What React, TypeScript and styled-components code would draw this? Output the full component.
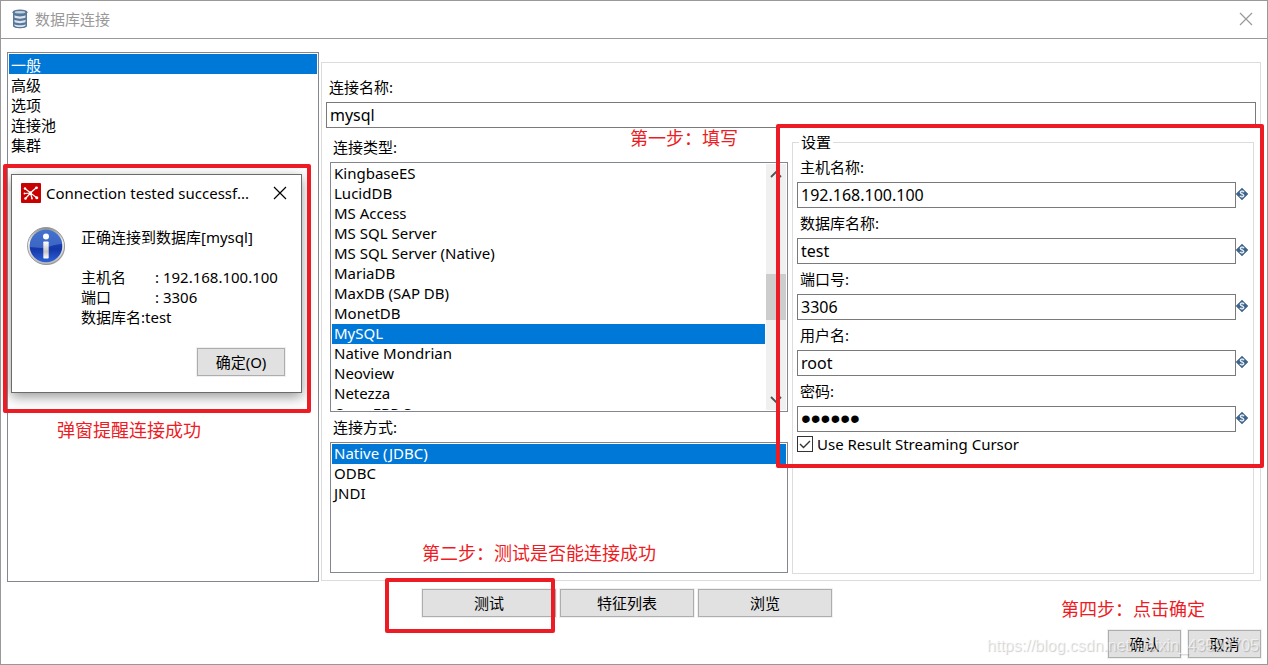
import React from 'react';
import styled, { createGlobalStyle } from 'styled-components';

const GlobalStyle = createGlobalStyle`
  * { box-sizing: border-box; }
  body {
    margin: 0;
    background: #fff;
    color: #000;
    font-family: "Noto Sans", "Noto Sans CJK SC", sans-serif;
    font-size: 15px;
    line-height: 20px;
  }
  button, input, select { font: inherit; color: inherit; }
`;

const Window = styled.div`
  position: relative;
  min-height: 100vh;
  display: flex;
  flex-direction: column;
  border: 1px solid #999;
  background: #fff;
`;

const TitleBar = styled.header`
  display: flex;
  align-items: center;
  height: 38px;
  padding: 0 14px 2px 10px;
  gap: 6px;
  border-bottom: 1px solid #999;
  color: #999;
`;

const Title = styled.h1`
  flex: 1;
  margin: 0;
  font-size: 15px;
  font-weight: 400;
`;

const CloseButton = styled.button`
  display: flex;
  padding: 0;
  border: 0;
  background: none;
`;

const Content = styled.main`
  flex: 1;
  display: grid;
  grid-template-columns: 312px minmax(0, 1fr);
  gap: 2px;
  padding: 13px 6px 0;
`;

const NavCell = styled.div`
  position: relative;
  display: flex;
`;

const Panel = styled.section`
  display: flex;
  flex-direction: column;
  margin: 10px 0 1px;
  padding: 14px 4px 6px;
  border: 1px solid #dcdcdc;
`;

const Label = styled.label`
  display: block;
  margin: 0 0 5px 3px;
`;

const TextInput = styled.input`
  display: block;
  flex: 1 1 26px;
  width: 100%;
  min-width: 0;
  height: 26px;
  padding: 0 3px;
  border: 1px solid #7a7a7a;
  border-radius: 0;
  background: #fff;
  outline: 0;
  font-size: 16px;
`;

const NameField = styled.div`
  display: flex;
  flex-direction: column;
`;

const Columns = styled.div`
  flex: 1;
  display: grid;
  grid-template-columns: 229fr 231fr;
  gap: 4px;
  margin: 4px 2px 0 4px;
`;

const ListColumn = styled.div`
  display: flex;
  flex-direction: column;
  padding: 5px 0 1px;
`;

const ListFrame = styled.div<{ $height: number; $fixed?: boolean }>`
  display: flex;
  flex: ${p => (p.$fixed ? 0 : 1)} 0 ${p => p.$height}px;
  margin-bottom: ${p => (p.$fixed ? 5 : 0)}px;
  padding: 1px;
  border: 1px solid #828790;
`;

const ListBox = styled.select`
  flex: 1;
  min-width: 0;
  height: auto;
  padding: 0;
  border: 0;
  border-radius: 0;
  outline: 0;
  background: #fff;
  overflow: hidden;
  scrollbar-width: none;

  option {
    display: flex;
    align-items: center;
    min-height: 20px;
    height: 20px;
    padding: 0 2px 2px;
    color: #000;
  }
  option:checked {
    background: #0078d7 linear-gradient(#0078d7, #0078d7);
    color: #fff;
    -webkit-text-fill-color: #fff;
  }
`;

const SectionList = styled(ListBox)`
  option { padding-bottom: 0; }
`;

const ScrollTrack = styled.div`
  display: flex;
  flex-direction: column;
  align-items: center;
  width: 20px;
  margin-left: 1px;
  padding: 4px 0;
  background: #f0f0f0;
`;

const ScrollThumb = styled.div`
  width: 20px;
  height: 46px;
  margin: 94px 0 auto;
  background: #cdcdcd;
`;

const SettingsCell = styled.div`
  position: relative;
  display: flex;
  min-width: 0;
`;

const Settings = styled.fieldset`
  flex: 1;
  min-width: 0;
  margin: 0;
  padding: 5px 5px 0 4px;
  border: 1px solid #dcdcdc;
`;

const Legend = styled.legend`
  margin-left: 2px;
  padding: 0 2px;
`;

const Field = styled.div`
  margin-bottom: 5px;
`;

const FieldRow = styled.div`
  display: flex;
  align-items: flex-start;
`;

const PasswordInput = styled(TextInput)`
  font-family: "Liberation Sans", sans-serif;
  font-size: 28px;
`;

const VariableMark = styled.svg`
  margin-top: 6px;
`;

const CheckRow = styled.label`
  display: flex;
  align-items: center;
  gap: 4px;
  margin-top: -3px;
`;

const Check = styled.input`
  appearance: none;
  width: 16px;
  height: 16px;
  margin: 0;
  border: 1px solid #333;
  background: #fff;

  &:checked {
    background: url("data:image/svg+xml,%3Csvg xmlns='http://www.w3.org/2000/svg' viewBox='0 0 14 14'%3E%3Cpath d='M2 7l3.5 3.5L12 4' fill='none' stroke='%23333' stroke-width='1.4'/%3E%3C/svg%3E") center / 14px 14px;
  }
`;

const PushButton = styled.button<{ $width: number }>`
  width: ${p => p.$width}px;
  height: 28px;
  padding: 0;
  border: 1px solid #adadad;
  background: #e1e1e1;
  box-shadow: 0 0 0 1px #f0f0f0;
`;

const ActionRow = styled.div`
  display: flex;
  justify-content: center;
  padding: 7px 14px 0 0;
`;

const ActionGroup = styled.div`
  position: relative;
  display: flex;
  gap: 4px;
`;

const Footer = styled.footer`
  position: relative;
  display: flex;
  justify-content: flex-end;
  gap: 7px;
  padding: 13px 6px 6px;
`;

const Highlight = styled.div<{ $inset: string; $width?: number; $height?: number }>`
  position: absolute;
  inset: ${p => p.$inset};
  width: ${p => (p.$width ? `${p.$width}px` : 'auto')};
  height: ${p => (p.$height ? `${p.$height}px` : 'auto')};
  border: 4px solid #ed1c24;
  border-radius: 2px;
  pointer-events: none;
  z-index: 3;
`;

const Note = styled.p<{ $inset: string }>`
  position: absolute;
  inset: ${p => p.$inset};
  margin: 0;
  color: #ed1c24;
  font-family: "Noto Sans CJK SC", sans-serif;
  font-size: 18px;
  font-weight: 400;
  line-height: 24px;
  white-space: nowrap;
  z-index: 3;
`;

const Watermark = styled.span`
  position: absolute;
  right: 8px;
  bottom: 8px;
  color: rgba(255, 255, 255, 0.6);
  font-family: "Liberation Sans", sans-serif;
  font-size: 16px;
  text-shadow: 1px 1px 1px rgba(0, 0, 0, 0.2);
  white-space: nowrap;
  pointer-events: none;
`;

const Dialog = styled.section`
  position: absolute;
  left: 4px;
  top: 122px;
  width: 291px;
  display: flex;
  flex-direction: column;
  border: 1px solid #6b6b6b;
  background: #fff;
  box-shadow: 0 4px 12px rgba(0, 0, 0, 0.4);
  z-index: 2;
`;

const DialogBar = styled.header`
  display: flex;
  align-items: center;
  height: 36px;
  padding: 0 14px 0 9px;
  gap: 5px;
`;

const DialogTitle = styled.h2`
  flex: 1;
  margin: 0;
  font-size: 15px;
  font-weight: 400;
  white-space: nowrap;
`;

const DialogBody = styled.div`
  display: flex;
  gap: 15px;
  padding: 15px 14px 21px;
`;

const Message = styled.div`
  padding-top: 1px;
`;

const Line = styled.p<{ $gap?: boolean }>`
  display: flex;
  margin: ${p => (p.$gap ? '0 0 20px' : '0')};
  white-space: nowrap;
`;

const Key = styled.span`
  width: 74px;
`;

const DialogActions = styled.div`
  display: flex;
  justify-content: flex-end;
  padding: 0 16px 16px;
`;

const Cross = () => (
  <svg width="14" height="14" viewBox="0 0 14 14" aria-hidden="true">
    <path d="M1 1l12 12M13 1L1 13" stroke="currentColor" strokeWidth="1.2" fill="none" />
  </svg>
);

const DatabaseIcon = () => (
  <svg width="18" height="20" viewBox="0 0 18 20" aria-hidden="true">
    <path d="M2 3v14c0 3 14 3 14 0V3" fill="#58789a" />
    <ellipse cx="9" cy="3.2" rx="7.5" ry="2.7" fill="#58789a" />
    <ellipse cx="9" cy="3.2" rx="5.3" ry="1.2" fill="#c5d2de" />
    <path d="M3.5 6.3c2 1.5 9 1.5 11 0v2.2c-2 1.5-9 1.5-11 0zM3.5 10.8c2 1.5 9 1.5 11 0V13c-2 1.5-9 1.5-11 0zM3.5 15.2c2 1.5 9 1.5 11 0v1.5c-2 1.7-9 1.7-11 0z" fill="#dce5ed" />
  </svg>
);

const ProductIcon = () => (
  <svg width="20" height="20" viewBox="0 0 20 20" aria-hidden="true">
    <rect width="20" height="20" rx="1" fill="#c80000" />
    <path d="M4 5.5l5.500 4.500 6-5.500M3.500 10.500l6-.5 6.300 4.800M4.500 15.500l5-5.500 1.500 5.500M9.500 10l3-3" stroke="#fff" strokeWidth="1.200" fill="none" />
    <g fill="#fff">
      <circle cx="9.500" cy="10" r="1.700" />
      <circle cx="4" cy="5.500" r="1.200" />
      <circle cx="15.500" cy="4.800" r="1.400" />
      <circle cx="3.500" cy="10.500" r="0.900" />
      <circle cx="4.500" cy="15.500" r="1.300" />
      <circle cx="15.800" cy="14.800" r="1.500" />
      <circle cx="11" cy="15.500" r="0.900" />
    </g>
  </svg>
);

const InfoIcon = () => (
  <svg width="40" height="40" viewBox="0 0 40 40" aria-hidden="true">
    <defs>
      <linearGradient id="infoRim" x1="0" y1="0" x2="0" y2="1">
        <stop offset="0" stopColor="#8f8f8f" />
        <stop offset="0.4" stopColor="#f4f4f4" />
        <stop offset="1" stopColor="#b5b5b5" />
      </linearGradient>
      <linearGradient id="infoFill" x1="0" y1="0" x2="0" y2="1">
        <stop offset="0" stopColor="#1f55b8" />
        <stop offset="0.6" stopColor="#1437a8" />
        <stop offset="1" stopColor="#2f62d8" />
      </linearGradient>
      <linearGradient id="infoStem" x1="0" y1="0" x2="0" y2="1">
        <stop offset="0" stopColor="#fff" />
        <stop offset="0.6" stopColor="#c4c4c4" />
        <stop offset="1" stopColor="#fff" />
      </linearGradient>
    </defs>
    <circle cx="21" cy="21" r="18" fill="#000" opacity="0.25" />
    <circle cx="20" cy="20" r="18.500" fill="url(#infoRim)" stroke="#8a8a8a" strokeWidth="0.800" />
    <circle cx="20" cy="20" r="16.300" fill="url(#infoFill)" />
    <path d="M4 21a16 16 0 0 1 32-3c-8 0-14 4-20 4-5 0-8-1-12-1z" fill="#6f9ae6" opacity="0.450" />
    <circle cx="20" cy="10.500" r="3" fill="#fff" />
    <rect x="17.300" y="15.500" width="5.400" height="17" rx="0.800" fill="url(#infoStem)" />
  </svg>
);

const VariableIcon = () => (
  <VariableMark width="12" height="12" viewBox="0 0 12 12" aria-hidden="true">
    <path d="M6 0l6 6-6 6-6-6z" fill="#3d6488" stroke="#3d6488" strokeWidth="0.500" />
    <path d="M8 4.200C7.500 2.800 4.300 2.800 4.300 4.500 4.300 6.200 7.800 5.700 7.800 7.500 7.800 9.200 4.400 9.200 4 7.800" stroke="#e4ecf3" strokeWidth="1.300" fill="none" />
    <path d="M6 2v8" stroke="#e4ecf3" strokeWidth="0.500" fill="none" />
  </VariableMark>
);

const Chevron = ({ down }: { down?: boolean }) => (
  <svg width="12" height="12" viewBox="0 0 12 12" aria-hidden="true">
    <path d={down ? 'M1 3l5 5 5-5' : 'M1 9l5-5 5 5'} stroke="#505050" strokeWidth="1.800" fill="none" />
  </svg>
);

const sections = ['一般', '高级', '选项', '连接池', '集群'];
const databases = [
  'KingbaseES', 'LucidDB', 'MS Access', 'MS SQL Server', 'MS SQL Server (Native)', 'MariaDB',
  'MaxDB (SAP DB)', 'MonetDB', 'MySQL', 'Native Mondrian', 'Neoview', 'Netezza', 'OpenERP Server',
];
const accessModes = ['Native (JDBC)', 'ODBC', 'JNDI'];
const fields = [
  { id: 'host', label: '主机名称:', value: '192.168.100.100' },
  { id: 'database', label: '数据库名称:', value: 'test' },
  { id: 'port', label: '端口号:', value: '3306' },
  { id: 'user', label: '用户名:', value: 'root' },
];

const options = (items: string[]) => items.map(item => <option key={item}>{item}</option>);

export default function App() {
  return (
    <>
      <GlobalStyle />
      <Window>
        <TitleBar>
          <DatabaseIcon />
          <Title>数据库连接</Title>
          <CloseButton aria-label="关闭"><Cross /></CloseButton>
        </TitleBar>

        <Content>
          <NavCell>
            <ListFrame $height={300}>
              <SectionList size={5} defaultValue="一般" aria-label="数据库连接">{options(sections)}</SectionList>
            </ListFrame>
            <Dialog role="dialog" aria-labelledby="dialog-title">
              <DialogBar>
                <ProductIcon />
                <DialogTitle id="dialog-title">Connection tested successf...</DialogTitle>
                <CloseButton aria-label="关闭"><Cross /></CloseButton>
              </DialogBar>
              <DialogBody>
                <InfoIcon />
                <Message>
                  <Line $gap>正确连接到数据库[mysql]</Line>
                  <Line><Key>主机名</Key>: 192.168.100.100</Line>
                  <Line><Key>端口</Key>: 3306</Line>
                  <Line>数据库名:test</Line>
                </Message>
              </DialogBody>
              <DialogActions>
                <PushButton $width={88}>确定(O)</PushButton>
              </DialogActions>
            </Dialog>
            <Highlight $inset="112px auto auto -4px" $width={308} $height={249} />
            <Note $inset="365px auto auto 50px">弹窗提醒连接成功</Note>
          </NavCell>

          <Panel>
            <NameField>
              <Label htmlFor="name">连接名称:</Label>
              <TextInput id="name" defaultValue="mysql" />
            </NameField>
            <Columns>
              <ListColumn>
                <Label htmlFor="type">连接类型:</Label>
                <ListFrame $height={250} $fixed>
                  <ListBox id="type" size={12} defaultValue="MySQL">{options(databases)}</ListBox>
                  <ScrollTrack>
                    <Chevron />
                    <ScrollThumb />
                    <Chevron down />
                  </ScrollTrack>
                </ListFrame>
                <Label htmlFor="mode">连接方式:</Label>
                <ListFrame $height={130}>
                  <ListBox id="mode" size={3} defaultValue="Native (JDBC)">{options(accessModes)}</ListBox>
                </ListFrame>
              </ListColumn>

              <SettingsCell>
                <Settings>
                  <Legend>设置</Legend>
                  {fields.map(f => (
                    <Field key={f.id}>
                      <Label htmlFor={f.id}>{f.label}</Label>
                      <FieldRow>
                        <TextInput id={f.id} defaultValue={f.value} />
                        <VariableIcon />
                      </FieldRow>
                    </Field>
                  ))}
                  <Field>
                    <Label htmlFor="password">密码:</Label>
                    <FieldRow>
                      <PasswordInput id="password" type="password" defaultValue="secret" />
                      <VariableIcon />
                    </FieldRow>
                  </Field>
                  <CheckRow>
                    <Check type="checkbox" defaultChecked />
                    Use Result Streaming Cursor
                  </CheckRow>
                </Settings>
                <Highlight $inset="-8px -10px auto -16px" $height={344} />
                <Note $inset="-7px auto auto -162px">第一步：填写</Note>
                <Note $inset="408px auto auto -370px">第二步：测试是否能连接成功</Note>
              </SettingsCell>
            </Columns>
          </Panel>
        </Content>

        <ActionRow>
          <ActionGroup>
            <PushButton $width={134}>测试</PushButton>
            <PushButton $width={134}>特征列表</PushButton>
            <PushButton $width={134}>浏览</PushButton>
            <Highlight $inset="-11px auto auto -37px" $width={170} $height={55} />
          </ActionGroup>
        </ActionRow>

        <Footer>
          <PushButton $width={73}>确认</PushButton>
          <PushButton $width={73}>取消</PushButton>
          <Note $inset="-21px 62px auto auto">第四步：点击确定</Note>
          <Watermark>https://blog.csdn.net/weixin_43599705</Watermark>
        </Footer>
      </Window>
    </>
  );
}
